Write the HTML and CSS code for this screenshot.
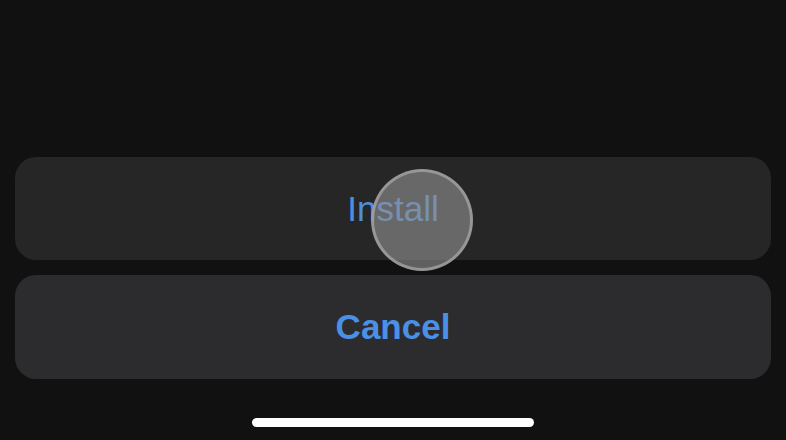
FILE: index.html
```html
<!DOCTYPE html>
<html>
<head>
<meta charset="utf-8">
<link rel="stylesheet" href="styles.css">
</head>
<body>
<div class="screen">
  <div class="sheet">
    <div class="btn btn-install">Install</div>
    <div class="btn btn-cancel">Cancel</div>
  </div>
  <div class="home-indicator"></div>
  <div class="touch"></div>
</div>
</body>
</html>
```

FILE: styles.css
```css
html, body {
  margin: 0;
  padding: 0;
  background: #111111;
}
.screen {
  position: relative;
  width: 786px;
  height: 440px;
  overflow: hidden;
  background: #111111;
  display: flex;
  flex-direction: column;
  font-family: "Liberation Sans", Arial, sans-serif;
}
.sheet {
  display: flex;
  flex-direction: column;
  gap: 15px;
  padding: 157px 15px 0 15px;
}
.btn {
  height: 104px;
  border-radius: 21px;
  display: flex;
  align-items: center;
  justify-content: center;
  font-size: 35px;
  color: #4a90e6;
}
.btn-install {
  background: #262627;
  font-weight: 400;
  color: #4d8fdf;
  height: 103px;
}
.btn-cancel {
  background: #2c2c2e;
  font-weight: 700;
}
.home-indicator {
  align-self: center;
  margin-top: 39px;
  width: 282px;
  height: 9px;
  border-radius: 5px;
  background: #ffffff;
}
.touch {
  position: absolute;
  left: 371px;
  top: 169px;
  width: 96px;
  height: 96px;
  border-radius: 50%;
  border: 3px solid rgba(160, 160, 160, 0.85);
  background: rgba(145, 145, 145, 0.62);
}
```
